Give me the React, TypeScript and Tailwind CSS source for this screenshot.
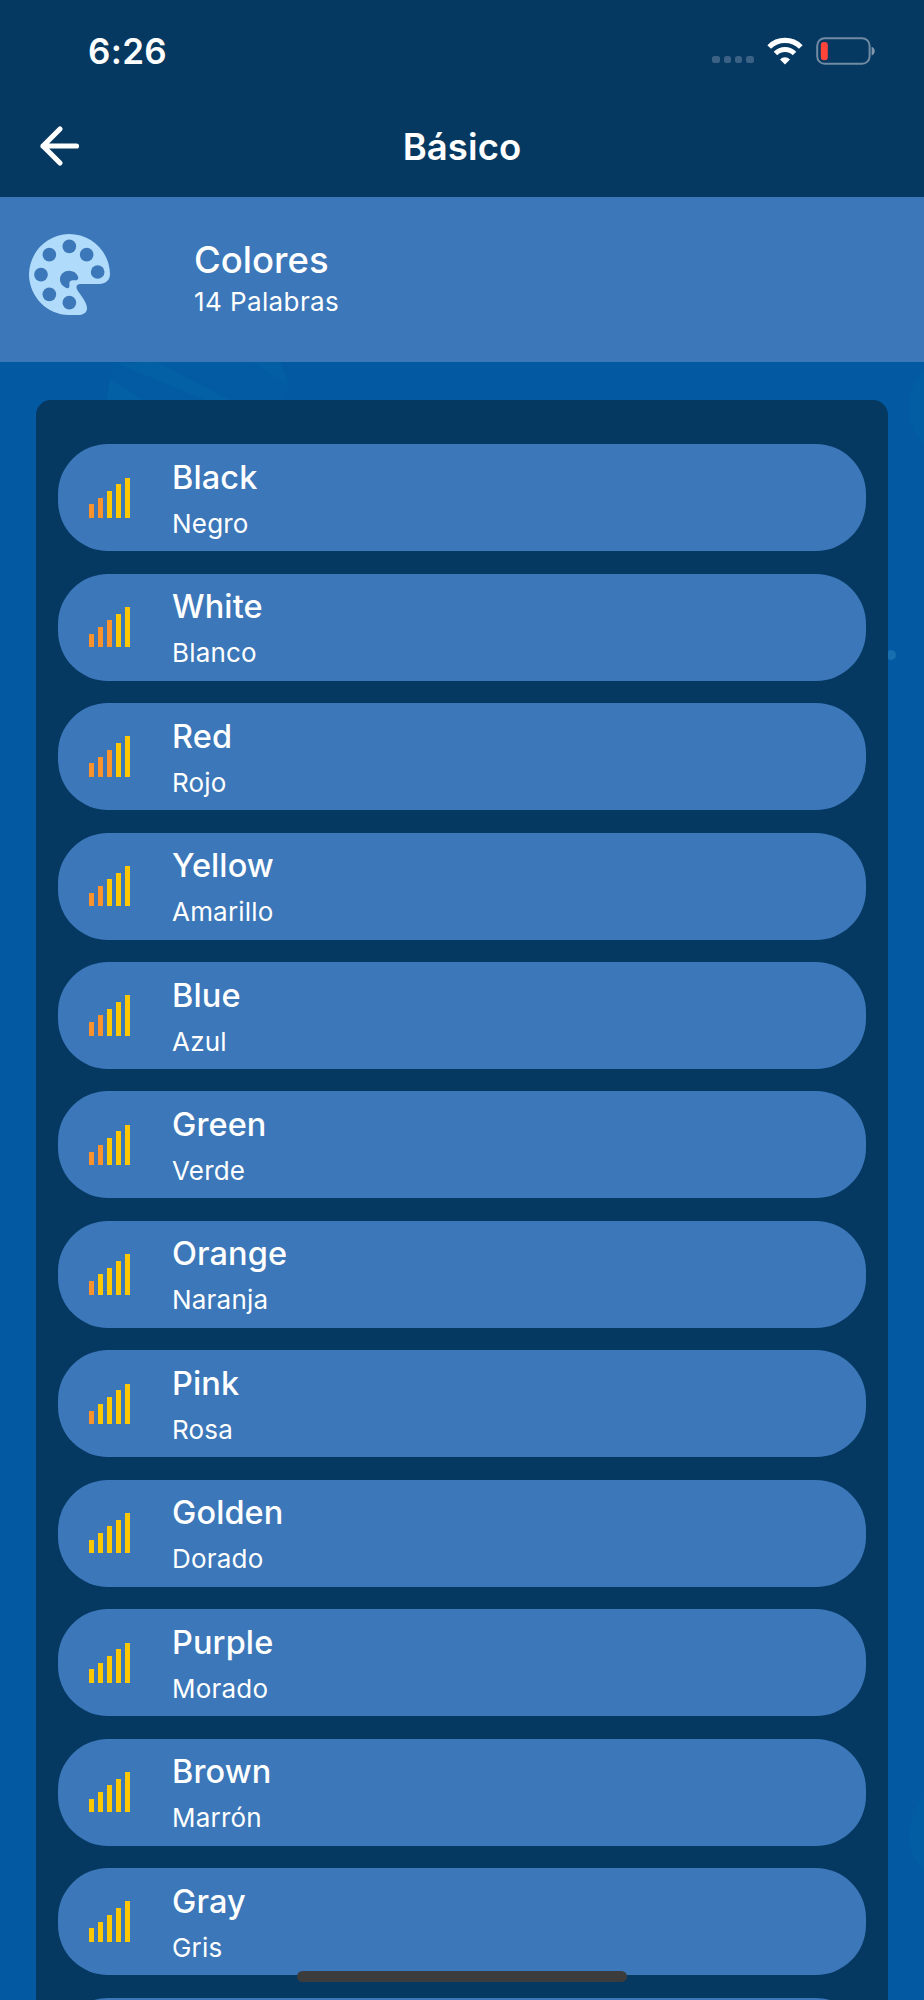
type Word = {
  term: string;
  translation: string;
  level: number;
};

const words: Word[] = [
  { term: 'Black', translation: 'Negro', level: 2 },
  { term: 'White', translation: 'Blanco', level: 3 },
  { term: 'Red', translation: 'Rojo', level: 3 },
  { term: 'Yellow', translation: 'Amarillo', level: 2 },
  { term: 'Blue', translation: 'Azul', level: 2 },
  { term: 'Green', translation: 'Verde', level: 2 },
  { term: 'Orange', translation: 'Naranja', level: 1 },
  { term: 'Pink', translation: 'Rosa', level: 1 },
  { term: 'Golden', translation: 'Dorado', level: 0 },
  { term: 'Purple', translation: 'Morado', level: 0 },
  { term: 'Brown', translation: 'Marrón', level: 0 },
  { term: 'Gray', translation: 'Gris', level: 0 }
];

const barHeights = [13.5, 20.3, 27, 33.7, 40.4];

function StatusBar() {
  return (
    <div className="flex h-[100px] items-start justify-between pl-[88px] pr-[48px]">
      <span className="pt-[29px] text-[35px] font-semibold leading-[44px] tracking-[0.3px]">6:26</span>
      <div className="flex pt-[36.5px]">
        <div className="mr-[13.5px] flex gap-[4px] pt-[19.5px]">
          {[0, 1, 2, 3].map((dot) => (
            <span key={dot} className="h-[7.3px] w-[7.3px] rounded-[2.5px] bg-[#3b6184]" />
          ))}
        </div>
        <svg width="36" height="28" viewBox="0 0 36 28" className="mr-[13px]" fill="none" stroke="#fff">
          <path d="M2.2 10 A22.3 22.3 0 0 1 33.8 10" strokeWidth="5.2" />
          <path d="M8.5 16.4 A13.4 13.4 0 0 1 27.5 16.4" strokeWidth="5" />
          <path d="M18 27.4 L13 22.4 A7.1 7.1 0 0 1 23 22.4 Z" fill="#fff" stroke="none" />
        </svg>
        <svg width="60" height="28" viewBox="0 0 60 28">
          <rect x="1.2" y="1.2" width="52.4" height="25.6" rx="7.5" fill="none" stroke="#708ba3" strokeWidth="2" />
          <rect x="4.8" y="4.9" width="7" height="18.4" rx="3.2" fill="#ff453a" />
          <path d="M55.6 9.7 C59.8 11 59.8 17 55.6 18.4 Z" fill="#8297ab" />
        </svg>
      </div>
    </div>
  );
}

function PaletteIcon() {
  return (
    <svg width="81" height="81" viewBox="0 0 243 243" className="mb-[10px] shrink-0">
      <path
        d="M120 0 C188 0 242 54 243 120 C243 139 229 150 211 150 H154 C142 151 140 158 145 168 C152 180 164 193 171 209 C180 231 168 243 146 243 H120 C54 242 1 188 0 122 C1 54 54 1 120 0 Z"
        fill="#b0dbfa"
      />
      <g fill="#3b77b9">
        <circle cx="121" cy="37" r="20.5" />
        <circle cx="61" cy="62" r="20.5" />
        <circle cx="173" cy="62" r="20.5" />
        <circle cx="36" cy="122" r="20.5" />
        <circle cx="206" cy="114" r="20.5" />
        <circle cx="61" cy="181" r="20.5" />
        <circle cx="121" cy="206" r="20.5" />
        <path d="M117 163 C105 160 92 150 93 134 C94 119 106 110 120 110 C136 110 147 121 148 132 C147 136 144 139 140 139 H130 C123 140 121 144 121 150 C122 156 121 161 117 163 Z" />
      </g>
    </svg>
  );
}

function LevelBars({ level }: { level: number }) {
  return (
    <div className="flex w-[41px] shrink-0 items-end gap-[4px]">
      {barHeights.map((height, i) => (
        <span key={height} className={i < level ? 'w-[5px] bg-[#fb932d]' : 'w-[5px] bg-[#fdc803]'} style={{ height }} />
      ))}
    </div>
  );
}

function WordRow({ word }: { word: Word }) {
  return (
    <li className="flex h-[107px] shrink-0 items-center rounded-[50px] bg-[#3b77b9] pl-[31px]">
      <LevelBars level={word.level} />
      <div className="ml-[42px] pt-[6px]">
        <p className="text-[32.5px] font-medium leading-[46px] tracking-[0.1px]">{word.term}</p>
        <p className="text-[26px] leading-[46px] tracking-[0.2px]">{word.translation}</p>
      </div>
    </li>
  );
}

// Faint planets behind the list
function Backdrop() {
  return (
    <svg className="absolute inset-0" width="924" height="1638" viewBox="0 362 924 1638">
      <path d="M120 361 Q108 376 106 400 H280 L290 387 L280 361 Z" fill="#035ca3" />
      <path d="M118 361 Q108 376 107 400 H143 L110 379 Z M155 361 L230 400 H205 L118 364 Z" fill="#0360a4" />
      <path d="M250 361 L289 385 L280 361 Z" fill="#035ea4" />
      <circle cx="963" cy="407" r="54" fill="#035da3" />
      <circle cx="891" cy="655" r="5" fill="#186eae" />
      <circle cx="963" cy="1835" r="54" fill="#035da3" />
    </svg>
  );
}

export default function App() {
  return (
    <div className="relative flex h-[2000px] w-[924px] flex-col overflow-hidden bg-[#035aa2] font-['Inter',sans-serif] text-white">
      <header className="h-[197px] shrink-0 bg-[#053961]">
        <StatusBar />
        <div className="grid h-[94px] grid-cols-[1fr_auto_1fr] items-center px-[38px]">
          <button type="button" aria-label="Volver" className="-mt-[2px] w-[44px]">
            <svg width="44" height="44" viewBox="0 0 44 44" fill="none" stroke="#fff" strokeWidth="5.2" strokeLinecap="round" strokeLinejoin="round">
              <path d="M22 3 L5 20 L22 37 M5 20 H38.5" transform="translate(0 2)" />
            </svg>
          </button>
          <h1 className="text-[36.5px] font-[560] leading-[44px] tracking-[0.1px]">Básico</h1>
        </div>
      </header>

      <section className="flex h-[165px] shrink-0 items-center bg-[#3b77b9] pl-[29px]">
        <PaletteIcon />
        <div className="ml-[84px] pt-[1px]">
          <h2 className="text-[36.5px] font-medium leading-[43px]">Colores</h2>
          <p className="text-[26px] leading-[40px] tracking-[0.4px]">14 Palabras</p>
        </div>
      </section>

      <main className="relative h-[1638px] shrink-0 overflow-hidden px-[36px] pt-[38px]">
        <Backdrop />
        <ul className="relative flex h-[1660px] flex-col gap-[22.45px] rounded-t-[15px] bg-[#053961] px-[22px] pt-[44.3px]">
          {words.map((word) => (
            <WordRow key={word.term} word={word} />
          ))}
          <li className="h-[107px] shrink-0 rounded-[50px] bg-[#3b77b9]" />
        </ul>
      </main>

      {/* Home indicator */}
      <div className="absolute bottom-[18px] left-[297px] h-[11px] w-[330px] rounded-full bg-[#3c3c3c]" />
    </div>
  );
}
